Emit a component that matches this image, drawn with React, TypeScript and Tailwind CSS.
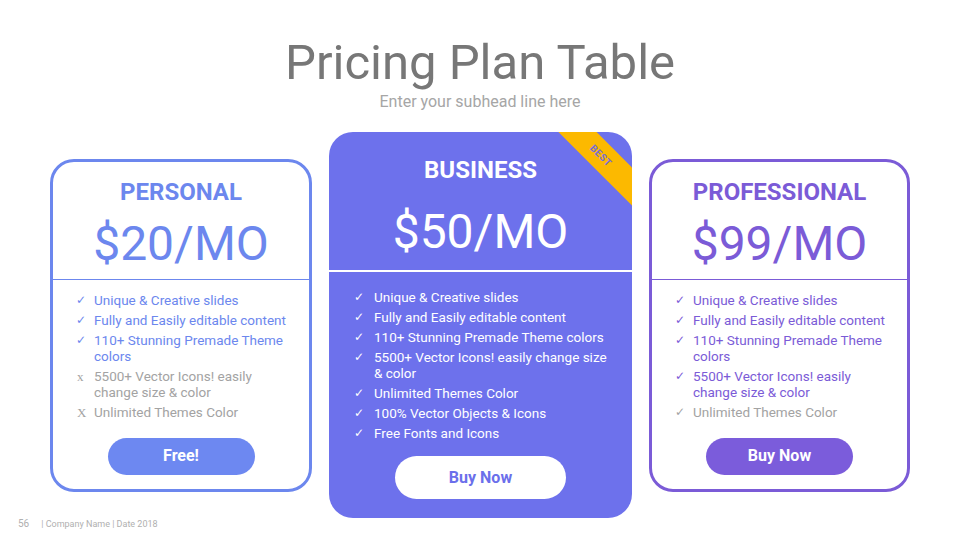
import React from 'react';

type Feature = { text: string; on: boolean; mark?: 'check' | 'x' | 'X' };

const personal: Feature[] = [
  { text: 'Unique & Creative slides', on: true },
  { text: 'Fully and Easily editable content', on: true },
  { text: '110+ Stunning Premade Theme colors', on: true },
  { text: '5500+ Vector Icons! easily change size & color', on: false, mark: 'x' },
  { text: 'Unlimited Themes Color', on: false, mark: 'X' },
];

const business: Feature[] = [
  { text: 'Unique & Creative slides', on: true },
  { text: 'Fully and Easily editable content', on: true },
  { text: '110+ Stunning Premade Theme colors', on: true },
  { text: '5500+ Vector Icons! easily change size & color', on: true },
  { text: 'Unlimited Themes Color', on: true },
  { text: '100% Vector Objects & Icons', on: true },
  { text: 'Free Fonts and Icons', on: true },
];

const professional: Feature[] = [
  { text: 'Unique & Creative slides', on: true },
  { text: 'Fully and Easily editable content', on: true },
  { text: '110+ Stunning Premade Theme colors', on: true },
  { text: '5500+ Vector Icons! easily change size & color', on: true },
  { text: 'Unlimited Themes Color', on: false, mark: 'check' },
];

const Mark: React.FC<{ mark?: 'check' | 'x' | 'X' }> = ({ mark = 'check' }) => {
  if (mark === 'check') {
    return <span className="font-['DejaVu_Sans',sans-serif] text-[12px] leading-none">✓</span>;
  }
  return <span className="font-['Liberation_Serif',serif] text-[13px] leading-none pl-[1px]">{mark}</span>;
};

const FeatureList: React.FC<{ items: Feature[]; onColor: string; offColor: string; textW: string; pl: string; markW: string }> = ({
  items,
  onColor,
  offColor,
  textW,
  pl,
  markW,
}) => (
  <ul className={`flex flex-col gap-[4px] ${pl}`}>
    {items.map((f) => (
      <li key={f.text} className={`flex items-start text-[13.5px] leading-[16px] ${f.on ? onColor : offColor}`}>
        <span className={`${markW} h-[16px] shrink-0 flex items-center`}>
          <Mark mark={f.mark} />
        </span>
        <span className={textW}>{f.text}</span>
      </li>
    ))}
  </ul>
);

const App: React.FC = () => {
  return (
    <div className="w-[960px] h-[540px] bg-white flex flex-col items-center font-['Roboto',sans-serif] overflow-hidden">
      <h1 className="mt-[35px] text-[49px] leading-[56px] text-[#777777] font-normal">Pricing Plan Table</h1>
      <p className="mt-[1px] text-[16px] leading-[20px] text-[#a6a6a6]">Enter your subhead line here</p>

      <div className="mt-[20px] flex items-center gap-[17px]">
        {/* personal */}
        <div className="w-[262px] h-[333px] border-[3px] border-[#6c87ee] rounded-[24px] flex flex-col">
          <div className="h-[117px] flex flex-col items-center text-[#6c87ee]">
            <div className="mt-[17px] text-[24px] leading-[26px] font-bold">PERSONAL</div>
            <div className="mt-[11px] text-[48px] leading-[56px]">$20/MO</div>
          </div>
          <div className="h-[1.5px] bg-[#6c87ee]" />
          <div className="pt-[12px]">
            <FeatureList
              items={personal}
              onColor="text-[#6c87ee]"
              offColor="text-[#a3a3a3]"
              textW="w-[203px]"
              pl="pl-[23px]"
              markW="w-[18px]"
            />
          </div>
          <button className="mt-auto mb-[14px] self-center w-[147px] h-[37px] rounded-full bg-[#6d88f1] text-white text-[16px] font-bold">
            Free!
          </button>
        </div>

        {/* business */}
        <div className="relative w-[303px] h-[386px] bg-[#6d71ec] rounded-[24px] overflow-hidden flex flex-col">
          <div className="absolute left-[197px] top-[10px] w-[150px] h-[27px] rotate-45 bg-[#fcb900] flex items-center justify-center">
            <span className="text-[10px] font-bold text-[#7a6fd6] tracking-[0.5px]">BEST</span>
          </div>
          <div className="h-[138px] flex flex-col items-center text-white">
            <div className="mt-[25px] text-[24px] leading-[26px] font-bold">BUSINESS</div>
            <div className="mt-[21px] text-[48px] leading-[56px]">$50/MO</div>
          </div>
          <div className="h-[2px] bg-white" />
          <div className="pt-[17px]">
            <FeatureList
              items={business}
              onColor="text-white"
              offColor="text-white"
              textW="w-[240px]"
              pl="pl-[25px]"
              markW="w-[20px]"
            />
          </div>
          <button className="mt-auto mb-[19px] self-center w-[171px] h-[43px] rounded-full bg-white text-[#6b6feb] text-[16px] font-bold">
            Buy Now
          </button>
        </div>

        {/* professional */}
        <div className="w-[261px] h-[333px] border-[3px] border-[#7b5bd7] rounded-[24px] flex flex-col">
          <div className="h-[117px] flex flex-col items-center text-[#7b5bd7]">
            <div className="mt-[17px] text-[24px] leading-[26px] font-bold">PROFESSIONAL</div>
            <div className="mt-[11px] text-[48px] leading-[56px]">$99/MO</div>
          </div>
          <div className="h-[1.5px] bg-[#7b5bd7]" />
          <div className="pt-[12px]">
            <FeatureList
              items={professional}
              onColor="text-[#7b5bd7]"
              offColor="text-[#a3a3a3]"
              textW="w-[201px]"
              pl="pl-[23px]"
              markW="w-[18px]"
            />
          </div>
          <button className="mt-auto mb-[14px] self-center w-[147px] h-[37px] rounded-full bg-[#7b5cdb] text-white text-[16px] font-bold">
            Buy Now
          </button>
        </div>
      </div>

      <div className="self-start -mt-[0px] pl-[18px] flex items-center text-[9px] leading-[12px] text-[#b0b0b0]">
        <span className="text-[10px]">56</span>
        <span className="ml-[12px]">| Company Name | Date 2018</span>
      </div>
    </div>
  );
};

export default App;
